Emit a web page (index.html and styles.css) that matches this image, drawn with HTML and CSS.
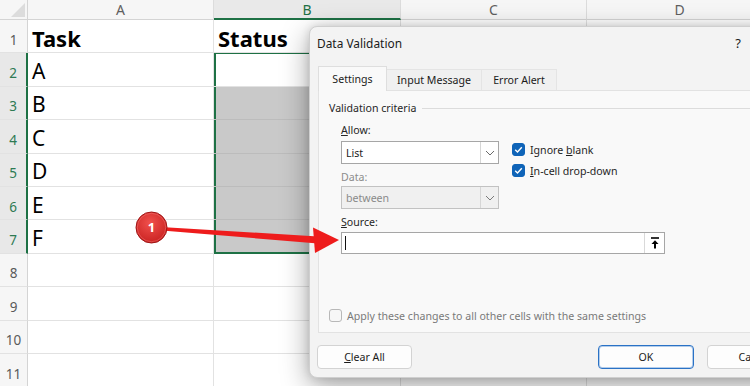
FILE: index.html
```html
<!DOCTYPE html>
<html>
<head>
<meta charset="utf-8">
<link rel="stylesheet" href="styles.css">
</head>
<body>
<div class="page">
  <div class="sheet">
    <div class="corner"><span class="tri"></span></div>
    <div class="ch">A</div>
    <div class="ch selc">B</div>
    <div class="ch">C</div>
    <div class="ch">D</div>

    <div class="rh">1</div>
    <div class="cell bold">Task</div>
    <div class="cell bold">Status</div>
    <div class="cell"></div>
    <div class="cell"></div>

    <div class="rh sel">2</div>
    <div class="cell">A</div>
    <div class="cell sb first"></div>
    <div class="cell"></div>
    <div class="cell"></div>

    <div class="rh sel">3</div>
    <div class="cell">B</div>
    <div class="cell sb shade"></div>
    <div class="cell"></div>
    <div class="cell"></div>

    <div class="rh sel">4</div>
    <div class="cell">C</div>
    <div class="cell sb shade"></div>
    <div class="cell"></div>
    <div class="cell"></div>

    <div class="rh sel">5</div>
    <div class="cell">D</div>
    <div class="cell sb shade"></div>
    <div class="cell"></div>
    <div class="cell"></div>

    <div class="rh sel">6</div>
    <div class="cell">E</div>
    <div class="cell sb shade"></div>
    <div class="cell"></div>
    <div class="cell"></div>

    <div class="rh sel">7</div>
    <div class="cell">F</div>
    <div class="cell sb shade last"></div>
    <div class="cell"></div>
    <div class="cell"></div>

    <div class="rh">8</div>
    <div class="cell"></div>
    <div class="cell"></div>
    <div class="cell"></div>
    <div class="cell"></div>

    <div class="rh">9</div>
    <div class="cell"></div>
    <div class="cell"></div>
    <div class="cell"></div>
    <div class="cell"></div>

    <div class="rh">10</div>
    <div class="cell"></div>
    <div class="cell"></div>
    <div class="cell"></div>
    <div class="cell"></div>

    <div class="rh">11</div>
    <div class="cell"></div>
    <div class="cell"></div>
    <div class="cell"></div>
    <div class="cell"></div>
  </div>

  <div class="dialog">
    <div class="dlg-title">
      <span class="title-text">Data Validation</span>
      <span class="help">?</span>
      <span class="close">✕</span>
    </div>
    <div class="tabs">
      <div class="tab active">Settings</div>
      <div class="tab t2">Input Message</div>
      <div class="tab t3">Error Alert</div>
    </div>
    <div class="panel">
      <div class="legend"><span>Validation criteria</span><i class="rule"></i></div>
      <div class="criteria">
        <div class="fields">
          <div class="lbl"><u>A</u>llow:</div>
          <div class="combo">
            <span class="val">List</span>
            <span class="drop"><svg width="10" height="6" viewBox="0 0 10 6"><path d="M1 1 L5 5 L9 1" fill="none" stroke="#6a6a6a" stroke-width="1"/></svg></span>
          </div>
          <div class="lbl dis">Data:</div>
          <div class="combo disabled">
            <span class="val">between</span>
            <span class="drop"><svg width="10" height="6" viewBox="0 0 10 6"><path d="M1 1 L5 5 L9 1" fill="none" stroke="#7a7a7a" stroke-width="1"/></svg></span>
          </div>
        </div>
        <div class="checks">
          <div class="chk"><span class="box on"><svg width="13" height="13" viewBox="0 0 13 13"><path d="M3.2 6.8 L5.5 9 L9.8 4.2" fill="none" stroke="#fff" stroke-width="1.4"/></svg></span><span class="ct">Ignore <u>b</u>lank</span></div>
          <div class="chk"><span class="box on"><svg width="13" height="13" viewBox="0 0 13 13"><path d="M3.2 6.8 L5.5 9 L9.8 4.2" fill="none" stroke="#fff" stroke-width="1.4"/></svg></span><span class="ct"><u>I</u>n-cell drop-down</span></div>
        </div>
      </div>
      <div class="lbl src"><u>S</u>ource:</div>
      <div class="source">
        <span class="caret"></span>
        <span class="pick"><svg width="12" height="14" viewBox="0 0 12 14"><path d="M2 2 H10" stroke="#000" stroke-width="1.6"/><path d="M2.5 8 L6 4.2 L9.5 8 Z" fill="#000"/><path d="M6 7 V12.5" stroke="#000" stroke-width="2"/></svg></span>
      </div>
      <div class="apply"><span class="box"></span><span class="ct">Apply these changes to all other cells with the same settings</span></div>
    </div>
    <div class="buttons">
      <button class="btn"><u>C</u>lear All</button>
      <span class="spacer"></span>
      <button class="btn ok">OK</button>
      <button class="btn">Cancel</button>
    </div>
  </div>

  <svg class="annot" width="750" height="386" viewBox="0 0 750 386">
    <defs>
      <radialGradient id="rg" cx="0.45" cy="0.35" r="0.7">
        <stop offset="0" stop-color="#f0504c"/>
        <stop offset="1" stop-color="#c8201f"/>
      </radialGradient>
    </defs>
    <polygon points="165,227.2 318,236.5 318,243.5 165,230.8" fill="#ee1c1c"/>
    <polygon points="313,227.5 339,240 315,253" fill="#ee1c1c"/>
    <circle cx="151.5" cy="227.5" r="15.5" fill="url(#rg)" stroke="#9e1414" stroke-width="1"/>
    <circle cx="151.5" cy="227.5" r="14.2" fill="none" stroke="#ff8f8f" stroke-width="0.6" opacity="0.6"/>
    <text x="151.5" y="232.2" text-anchor="middle" class="num">1</text>
  </svg>
</div>
</body>
</html>
```

FILE: styles.css
```css
* { box-sizing: border-box; }
html, body { margin: 0; padding: 0; }
body { width: 750px; height: 386px; overflow: hidden; background: #fff; }

.page {
  position: relative;
  width: 750px;
  height: 386px;
  overflow: hidden;
  font-family: "Noto Sans", "Open Sans", sans-serif;
}

/* ---------- spreadsheet ---------- */
.sheet {
  display: grid;
  grid-template-columns: 28px 186px 187px 186px 186px;
  grid-template-rows: 20px repeat(11, 33.4px);
}

.corner {
  background: #f6f6f6;
  border-right: 1px solid #d4d4d4;
  border-bottom: 1px solid #d4d4d4;
  position: relative;
}
.tri {
  position: absolute;
  right: 2px;
  bottom: 2px;
  width: 14px;
  height: 14px;
  background: #dcdcdc;
  clip-path: polygon(100% 0, 100% 100%, 0 100%);
}

.ch {
  background: #f6f6f6;
  border-right: 1px solid #dcdcdc;
  border-bottom: 1px solid #d4d4d4;
  color: #5f5f5f;
  font-size: 14px;
  display: flex;
  align-items: center;
  justify-content: center;
  line-height: 1;
  padding-top: 1px;
}
.ch.selc {
  background: #e9e9e9;
  border-bottom: 2px solid #1e7145;
  color: #1e7145;
}

.rh {
  background: #f6f6f6;
  border-right: 1px solid #d4d4d4;
  border-bottom: 1px solid #e2e2e2;
  color: #5a5a5a;
  font-size: 13.5px;
  display: flex;
  align-items: center;
  justify-content: center;
  padding-top: 7px;
}
.rh.sel {
  background: #e8e8e8;
  color: #2e7a53;
  border-right: 2px solid #1e7145;
}

.cell {
  border-right: 1px solid #e2e2e2;
  border-bottom: 1px solid #e2e2e2;
  font-size: 21px;
  color: #000;
  display: flex;
  align-items: center;
  padding: 4px 0 0 4px;
  line-height: 1;
}
.cell.bold { font-weight: 700; font-size: 22px; }
.cell.shade { background: #c9c9c9; border-bottom-color: #bcbcbc; }
.cell.sb { box-shadow: inset 2px 0 0 #1e7145; }
.cell.sb.first { box-shadow: inset 2px 0 0 #1e7145, inset 0 1px 0 #1e7145; }
.cell.sb.last { box-shadow: inset 2px 0 0 #1e7145, inset 0 -1px 0 #1e7145; border-bottom: 1px solid #1e7145; }

/* ---------- dialog ---------- */
.dialog {
  position: absolute;
  left: 309px;
  top: 26px;
  width: 503px;
  height: 352px;
  background: #f3f3f3;
  border: 1px solid #cfcfcf;
  border-radius: 8px;
  box-shadow: 0 8px 28px rgba(0, 0, 0, 0.36), 0 0 8px rgba(0,0,0,0.12);
  color: #1b1b1b;
  font-size: 10.6px;
  display: flex;
  flex-direction: column;
}

.dlg-title {
  height: 32px;
  display: flex;
  align-items: center;
  padding-left: 7px;
  font-size: 11.9px;
  color: #1a1a1a;
}
.title-text { flex: 1; }
.help { margin-right: 46px; font-size: 13px; }
.close { margin-right: 14px; font-size: 12px; }

.tabs {
  margin: 7px 0 0 8px;
  display: flex;
  align-items: flex-end;
  height: 24px;
  position: relative;
  z-index: 1;
}
.tab {
  height: 21px;
  background: #f0f0f0;
  border: 1px solid #e4e4e4;
  border-left: none;
  border-bottom: none;
  display: flex;
  align-items: center;
  justify-content: center;
  color: #1b1b1b;
}
.tab.active {
  width: 69px;
  height: 25px;
  margin-bottom: -1px;
  background: #f9f9f9;
  border-left: 1px solid #dedede;
  border-color: #dedede;
  padding-bottom: 1px;
}
.tab.t2 { width: 95px; }
.tab.t3 { width: 75px; }

.panel {
  margin: 0 8px;
  height: 243px;
  background: #f9f9f9;
  border: 1px solid #e2e2e2;
  padding: 9px 0 0 10px;
  display: flex;
  flex-direction: column;
}

.legend {
  height: 16px;
  display: flex;
  align-items: center;
  color: #262626;
}
.rule {
  flex: 1;
  height: 0;
  border-top: 1px solid #dcdcdc;
  margin: 0 10px 0 6px;
}

.criteria {
  margin: 6px 0 0 12px;
  display: flex;
}
.fields {
  width: 158px;
  display: flex;
  flex-direction: column;
}
.lbl {
  height: 16px;
  line-height: 16px;
  color: #262626;
}
.lbl.dis { color: #8c8c8c; margin-top: 5px; }
.lbl.src { margin: 5px 0 0 12px; }
.lbl u, .chk u, .btn u { text-underline-offset: 1px; }

.combo {
  margin-top: 3px;
  height: 23px;
  background: #fff;
  border: 1px solid #a6a6a6;
  display: flex;
  align-items: center;
}
.combo.disabled {
  margin-top: 1px;
  background: #f0f0f0;
  border-color: #c2c2c2;
  color: #8a8a8a;
}
.val { flex: 1; padding-left: 4px; }
.drop {
  width: 18px;
  height: 100%;
  border-left: 1px solid #d6d6d6;
  display: flex;
  align-items: center;
  justify-content: center;
}

.checks {
  margin-left: 13px;
  padding-top: 21px;
  display: flex;
  flex-direction: column;
  gap: 8px;
}
.chk {
  height: 13px;
  display: flex;
  align-items: center;
  gap: 5px;
  color: #1f1f1f;
}
.ct { white-space: pre; }
.box {
  width: 13px;
  height: 13px;
  border-radius: 3px;
  border: 1px solid #a9a9a9;
  background: #f7f7f7;
  display: block;
  flex: none;
}
.box.on {
  background: #0f64b8;
  border-color: #0f64b8;
  display: flex;
}
.box.on svg { margin: -1px; }

.source {
  margin: 2px 0 0 12px;
  width: 324px;
  height: 22px;
  background: #fff;
  border: 1px solid #a6a6a6;
  display: flex;
  align-items: center;
}
.caret {
  width: 1px;
  height: 14px;
  background: #111;
  margin-left: 3px;
}
.pick {
  margin-left: auto;
  width: 20px;
  height: 100%;
  border-left: 1px solid #d9d9d9;
  display: flex;
  align-items: center;
  justify-content: center;
}

.apply {
  margin-top: 55px;
  height: 13px;
  display: flex;
  align-items: center;
  gap: 5px;
  color: #7a7a7a;
}
.apply .box { background: #f7f7f7; border-color: #b8b8b8; }

.buttons {
  margin-top: 12px;
  padding: 0 8px 0 7px;
  display: flex;
  align-items: center;
}
.spacer { flex: 1; }
.btn {
  height: 24px;
  width: 96px;
  background: #fdfdfd;
  border: 1px solid #d3d3d3;
  border-radius: 4px;
  font-family: "Noto Sans", "Open Sans", sans-serif;
  font-size: 10.6px;
  color: #1b1b1b;
  padding: 0;
}
.btn:first-child { width: 95px; }
.btn.ok {
  border-color: #2a72c6;
  box-shadow: inset 0 0 0 1px rgba(42, 114, 198, 0.35);
  margin-right: 13px;
}

/* ---------- annotation ---------- */
.annot {
  position: absolute;
  left: 0;
  top: 0;
  pointer-events: none;
}
.num {
  font-family: "Noto Sans", sans-serif;
  font-weight: 700;
  font-size: 13px;
  fill: #fff;
}
```
